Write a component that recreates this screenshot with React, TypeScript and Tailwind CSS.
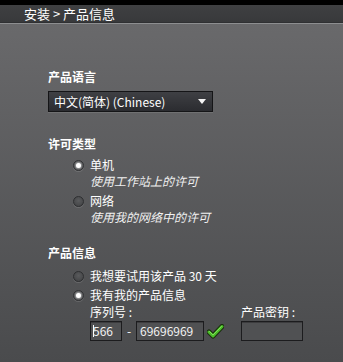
import React from 'react';

const cjk = '"Noto Sans CJK SC", "Liberation Sans", sans-serif';

function Radio({ checked }: { checked?: boolean }) {
  return (
    <span className="w-[11px] h-[11px] rounded-full border border-[#2e2f31] bg-[radial-gradient(circle_at_50%_40%,#5a5b5d,#3f4042)] flex items-center justify-center shrink-0 shadow-[0_1px_0_rgba(255,255,255,0.12)]">
      {checked && <span className="w-[5px] h-[5px] rounded-full bg-white shadow-[0_0_2px_1px_rgba(255,255,255,0.5)]" />}
    </span>
  );
}

function RadioRow({ checked, label, note, className = '' }: { checked?: boolean; label: string; note?: string; className?: string }) {
  return (
    <div className={`pl-[25px] ${className}`}>
      <div className="flex items-center gap-[6px] h-[16px]">
        <Radio checked={checked} />
        <span className="text-[12px] leading-[16px] text-white">{label}</span>
      </div>
      {note && <div className="pl-[17px] text-[12px] leading-[16px] italic text-[#f0f0f0]">{note}</div>}
    </div>
  );
}

function Field({ w, children }: { w: string; children?: React.ReactNode }) {
  return (
    <div className={`${w} h-[20px] border border-[#1c1c1e] bg-[#505153] shadow-[inset_0_1px_0_rgba(0,0,0,0.25)] flex items-center px-[3px] text-[12px] text-[#f2f2f2] overflow-hidden`}>
      {children}
    </div>
  );
}

export default function App() {
  return (
    <div className="w-[343px] h-[362px] flex flex-col overflow-hidden" style={{ fontFamily: cjk }}>
      <div className="h-[5px] bg-black" />
      <div className="h-[17px] bg-gradient-to-b from-[#3f4042] to-[#38393b] pl-6 flex items-center text-[13px] text-white">
        安装 &gt; 产品信息
      </div>
      <div className="h-px bg-[#2f3032]" />
      <div className="h-px bg-[#8d8e90]" />
      <div className="flex-1 bg-gradient-to-b from-[#69696b] to-[#4a4b4d] pl-[48px] pt-[45px]">
        {/* 产品语言 */}
        <div className="text-[12px] leading-[16px] font-bold text-white">产品语言</div>
        <div className="mt-[6px] w-[165px] h-[21px] border border-[#151517] bg-gradient-to-b from-[#3f4044] to-[#2b2c30] flex items-center justify-between pl-[5px] pr-[6px] text-[12px] text-white shadow-[0_1px_0_rgba(255,255,255,0.1)]">
          <span>中文(简体) (Chinese)</span>
          <svg width="8" height="5" viewBox="0 0 8 5"><path d="M0 0h8L4 5z" fill="#f4f4f4" /></svg>
        </div>

        {/* 许可类型 */}
        <div className="mt-[24px] text-[12px] leading-[16px] font-bold text-white">许可类型</div>
        <RadioRow className="mt-[5px]" checked label="单机" note="使用工作站上的许可" />
        <RadioRow className="mt-[4px]" label="网络" note="使用我的网络中的许可" />

        {/* 产品信息 */}
        <div className="mt-[20px] text-[12px] leading-[16px] font-bold text-white">产品信息</div>
        <RadioRow className="mt-[7px]" label="我想要试用该产品 30 天" />
        <RadioRow className="mt-[3px]" checked label="我有我的产品信息" />

        <div className="mt-px pl-[42px] flex">
          <div>
            <div className="text-[12px] leading-[16px] text-white">序列号 :</div>
            <div className="mt-px flex items-center">
              <Field w="w-[32px]">
                <span className="w-px h-[12px] bg-white mr-px -ml-[1px]" />
                <span className="-ml-[2px]">566</span>
              </Field>
              <span className="w-[14px] text-center text-[12px] text-white">-</span>
              <Field w="w-[68px]">69696969</Field>
              <svg className="ml-[3px]" width="17" height="15" viewBox="0 0 17 15">
                <path d="M2 8 L6 12 L15 2.5" fill="none" stroke="#1a2e0e" strokeWidth="5" strokeLinecap="round" strokeLinejoin="round" />
                <path d="M2 8 L6 12 L15 2.5" fill="none" stroke="#4cbf2a" strokeWidth="3" strokeLinecap="round" strokeLinejoin="round" />
                <path d="M2.5 7.5 L6 11 L14.5 2.5" fill="none" stroke="#8fe46a" strokeWidth="0.8" strokeLinecap="round" strokeLinejoin="round" />
              </svg>
            </div>
          </div>
          <div className="ml-[17px]">
            <div className="text-[12px] leading-[16px] text-white">产品密钥 :</div>
            <div className="mt-px">
              <Field w="w-[62px]" />
            </div>
          </div>
        </div>
      </div>
    </div>
  );
}
